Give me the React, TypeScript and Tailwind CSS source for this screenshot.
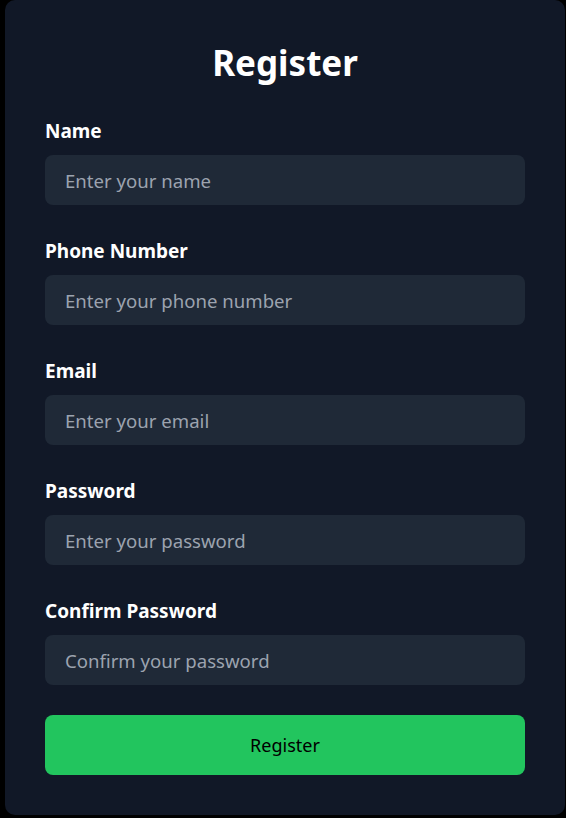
const fields = [
  { id: "name", label: "Name", type: "text", placeholder: "Enter your name" },
  { id: "phone", label: "Phone Number", type: "tel", placeholder: "Enter your phone number" },
  { id: "email", label: "Email", type: "email", placeholder: "Enter your email" },
  { id: "password", label: "Password", type: "password", placeholder: "Enter your password" },
  { id: "confirm", label: "Confirm Password", type: "password", placeholder: "Confirm your password" },
];

export default function App() {
  return (
    <div className="min-h-screen bg-black font-['Noto_Sans',sans-serif]">
      <div className="ml-[5px] w-[560px] rounded-[10px] bg-[#111827] px-10 pb-10 pt-[43px]">
        <h1 className="text-center text-[35px] leading-10 font-bold text-white">Register</h1>
        <form className="mt-[34px] flex flex-col gap-8" onSubmit={(e) => e.preventDefault()}>
          {fields.map((f) => (
            <div key={f.id}>
              <label
                htmlFor={f.id}
                className="mb-[10px] block text-[19px] leading-7 font-bold text-white"
              >
                {f.label}
              </label>
              <input
                id={f.id}
                type={f.type}
                placeholder={f.placeholder}
                className="block h-[50px] w-full rounded-lg bg-[#1f2937] px-5 text-[18.6px] text-white outline-none placeholder:text-[#9ca3af]"
              />
            </div>
          ))}
          <button
            type="submit"
            className="-mt-[2px] h-[60px] w-full rounded-lg bg-[#22c55e] text-lg text-black"
          >
            Register
          </button>
        </form>
      </div>
    </div>
  );
}
